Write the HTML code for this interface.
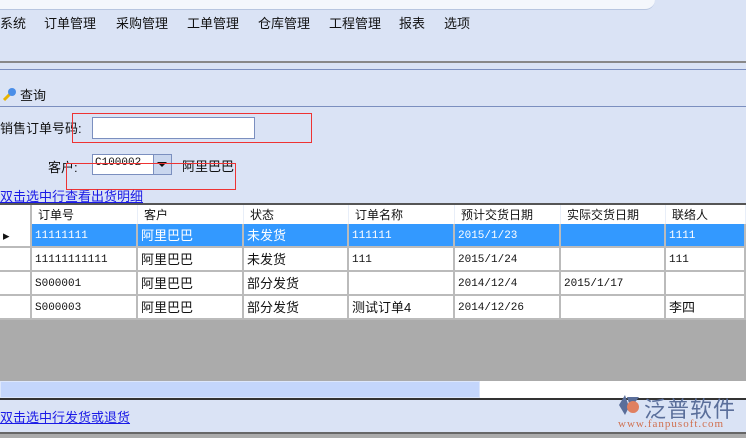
<!DOCTYPE html>
<html><head><meta charset="utf-8"><style>
*{margin:0;padding:0;box-sizing:border-box}
body{width:746px;height:438px;overflow:hidden;background:#dae3f5;font-family:"Liberation Sans","Noto Sans CJK SC",sans-serif;font-size:13px;color:#111;position:relative}
.a{position:absolute}
.menu span{position:absolute;top:13px;font-size:13px}
.g{position:absolute;left:0;top:203px;width:746px;height:118px;background:#fff;border-top:2px solid #555}
.c{position:absolute;height:24px;line-height:24px;padding-left:3px;border-right:2px solid #bbb;border-bottom:2px solid #bbb;white-space:nowrap;overflow:hidden;font-size:13px}
.s{font-family:"Liberation Mono","Noto Sans CJK SC",monospace;font-size:11px}
.h{height:21px;line-height:21px;border-right:1px solid #e8eef8;border-bottom:none;padding-left:6px;font-size:12px}
.sel{background:#3399ff;color:#fff}
a{color:#1a1ae6;text-decoration:underline}
</style></head><body>
<div class="a" style="left:0;top:0;width:655px;height:10px;background:#f4f7fc;border-bottom:1px solid #b8c6e0;border-bottom-right-radius:14px"></div>
<div class="menu">
<span style="left:0">系统</span><span style="left:44px">订单管理</span><span style="left:116px">采购管理</span><span style="left:187px">工单管理</span><span style="left:258px">仓库管理</span><span style="left:329px">工程管理</span><span style="left:399px">报表</span><span style="left:444px">选项</span>
</div>
<div class="a" style="left:0;top:61px;width:746px;height:2px;background:#888"></div>
<div class="a" style="left:0;top:69px;width:746px;height:1px;background:#7b8fbf"></div>
<div class="a" style="left:0;top:106px;width:746px;height:1px;background:#7b8fbf"></div>
<svg class="a" style="left:2px;top:86px" width="16" height="16"><line x1="2" y1="14" x2="8" y2="8" stroke="#e8b400" stroke-width="3"/><circle cx="10" cy="6" r="4" fill="#4a8ee8"/></svg>
<div class="a" style="left:20px;top:85px">查询</div>
<div class="a" style="left:0;top:118px">销售订单号码:</div>
<div class="a" style="left:92px;top:117px;width:163px;height:22px;background:#fff;border:1px solid #7b8fbf"></div>
<div class="a" style="left:72px;top:113px;width:240px;height:30px;border:1px solid #e33"></div>
<div class="a" style="left:48px;top:157px">客户:</div>
<div class="a" style="left:92px;top:154px;width:80px;height:21px;background:#fff;border:1px solid #7b8fbf"></div>
<div class="a s" style="left:95px;top:157px">C100002</div>
<div class="a" style="left:153px;top:155px;width:18px;height:19px;background:#c9d6ee;border-left:1px solid #7b8fbf"></div>
<div class="a" style="left:157px;top:162px;border-left:5px solid transparent;border-right:5px solid transparent;border-top:5px solid #111"></div>
<div class="a" style="left:182px;top:156px">阿里巴巴</div>
<div class="a" style="left:66px;top:163px;width:170px;height:27px;border:1px solid #e33"></div>
<div class="a" style="left:0;top:186px"><a>双击选中行查看出货明细</a></div>
<div class="g">
<div class="c h" style="left:0;top:0;width:32px;border-right:2px solid #bbb"></div>
<div class="c h" style="left:32px;top:0;width:106px">订单号</div>
<div class="c h" style="left:138px;top:0;width:106px">客户</div>
<div class="c h" style="left:244px;top:0;width:105px">状态</div>
<div class="c h" style="left:349px;top:0;width:106px">订单名称</div>
<div class="c h" style="left:455px;top:0;width:106px">预计交货日期</div>
<div class="c h" style="left:561px;top:0;width:105px">实际交货日期</div>
<div class="c h" style="left:666px;top:0;width:80px">联络人</div>
</div>
<div class="a" style="left:0;top:224px">
<div class="c" style="left:0;top:0;width:32px">▸</div>
<div class="c sel s" style="left:32px;top:0;width:106px">11111111</div>
<div class="c sel" style="left:138px;top:0;width:106px">阿里巴巴</div>
<div class="c sel" style="left:244px;top:0;width:105px">未发货</div>
<div class="c sel s" style="left:349px;top:0;width:106px">111111</div>
<div class="c sel s" style="left:455px;top:0;width:106px">2015/1/23</div>
<div class="c sel" style="left:561px;top:0;width:105px"></div>
<div class="c sel s" style="left:666px;top:0;width:80px">1111</div>

<div class="c" style="left:0;top:24px;width:32px"></div>
<div class="c s" style="left:32px;top:24px;width:106px">11111111111</div>
<div class="c" style="left:138px;top:24px;width:106px">阿里巴巴</div>
<div class="c" style="left:244px;top:24px;width:105px">未发货</div>
<div class="c s" style="left:349px;top:24px;width:106px">111</div>
<div class="c s" style="left:455px;top:24px;width:106px">2015/1/24</div>
<div class="c" style="left:561px;top:24px;width:105px"></div>
<div class="c s" style="left:666px;top:24px;width:80px">111</div>

<div class="c" style="left:0;top:48px;width:32px"></div>
<div class="c s" style="left:32px;top:48px;width:106px">S000001</div>
<div class="c" style="left:138px;top:48px;width:106px">阿里巴巴</div>
<div class="c" style="left:244px;top:48px;width:105px">部分发货</div>
<div class="c" style="left:349px;top:48px;width:106px"></div>
<div class="c s" style="left:455px;top:48px;width:106px">2014/12/4</div>
<div class="c s" style="left:561px;top:48px;width:105px">2015/1/17</div>
<div class="c" style="left:666px;top:48px;width:80px"></div>

<div class="c" style="left:0;top:72px;width:32px"></div>
<div class="c s" style="left:32px;top:72px;width:106px">S000003</div>
<div class="c" style="left:138px;top:72px;width:106px">阿里巴巴</div>
<div class="c" style="left:244px;top:72px;width:105px">部分发货</div>
<div class="c" style="left:349px;top:72px;width:106px">测试订单4</div>
<div class="c s" style="left:455px;top:72px;width:106px">2014/12/26</div>
<div class="c" style="left:561px;top:72px;width:105px"></div>
<div class="c" style="left:666px;top:72px;width:80px">李四</div>
</div>
<div class="a" style="left:0;top:320px;width:746px;height:61px;background:#ababab"></div>
<div class="a" style="left:0;top:381px;width:746px;height:17px;background:#fff"></div>
<div class="a" style="left:0;top:381px;width:480px;height:17px;background:#c4d6fb;border:1px solid #dde7fb"></div>
<div class="a" style="left:0;top:398px;width:746px;height:2px;background:#333"></div>
<div class="a" style="left:0;top:407px"><a>双击选中行发货或退货</a></div>
<svg class="a" style="left:617px;top:393px" width="26" height="24"><path d="M8 2 L2 12 L8 22 L12 14 Z" fill="#5a6e9a"/><path d="M10 4 L22 4 L16 12 L12 10 Z" fill="#5a6e9a"/><circle cx="16" cy="14" r="6" fill="#e08060"/></svg>
<div class="a" style="left:644px;top:392px;font-size:22px;color:#5a6e9a;letter-spacing:1px">泛普软件</div>
<div class="a" style="left:618px;top:418px;font-family:'Liberation Serif',serif;font-size:11px;color:#d07050;letter-spacing:1px">www.fanpusoft.com</div>
<div class="a" style="left:0;top:432px;width:746px;height:6px;background:#ababab;border-top:2px solid #666"></div>
</body></html>
